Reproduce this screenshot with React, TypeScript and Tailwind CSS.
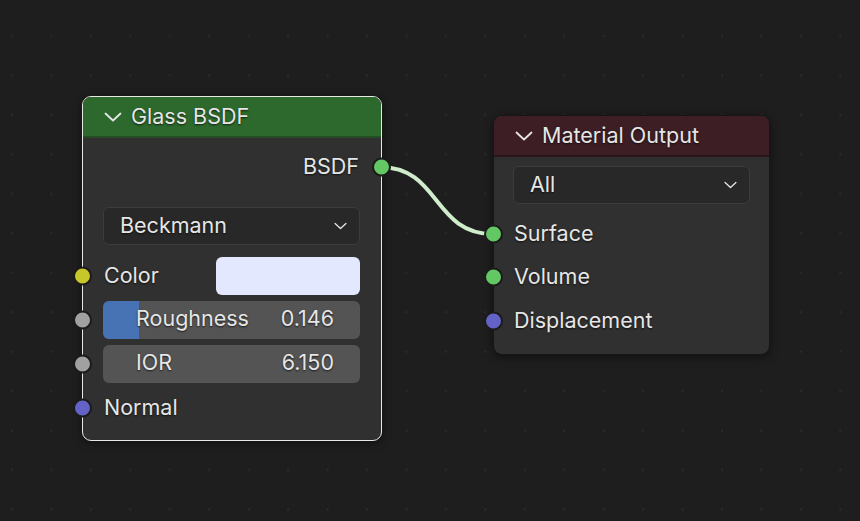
import type { ReactNode } from 'react';

const FONT = "font-['Inter','Noto_Sans',sans-serif]";

const Chevron = ({ className = '' }: { className?: string }) => (
  <svg viewBox="0 0 18 10" className={className} fill="none">
    <polyline points="1.5,1.5 9,8.5 16.5,1.5" stroke="#e6e6e6" strokeWidth="1.8" strokeLinecap="round" strokeLinejoin="round" />
  </svg>
);

const Socket = ({ color, side }: { color: string; side: 'left' | 'right' }) => (
  <span
    className={`absolute top-1/2 -translate-y-1/2 w-[19px] h-[19px] rounded-full border-2 border-[#1b1b1b] ${
      side === 'left' ? 'left-[-10px]' : 'right-[-10px]'
    }`}
    style={{ backgroundColor: color }}
  />
);

const Label = ({ children }: { children: ReactNode }) => (
  <span className="text-[21.5px] text-[#e6e6e6] [text-shadow:0_1px_2px_rgba(0,0,0,0.7)] leading-none">{children}</span>
);

const Dropdown = ({ value }: { value: string }) => (
  <div className="h-[38px] flex items-center justify-between rounded-[6px] bg-[#282828] border border-[#3c3c3c] pl-[16px] pr-[12px]">
    <Label>{value}</Label>
    <Chevron className="w-[13px] h-[8px]" />
  </div>
);

const Slider = ({ label, value, fill }: { label: string; value: number; fill?: number }) => (
  <div className="relative h-[38px] rounded-[6px] bg-[#545454] overflow-hidden flex items-center justify-between pl-[33px] pr-[26px]">
    {fill !== undefined && (
      <div className="absolute left-0 top-0 bottom-0 bg-[#4772b3]" style={{ width: `${fill * 100}%` }} />
    )}
    <span className="relative"><Label>{label}</Label></span>
    <span className="relative"><Label>{value.toFixed(3)}</Label></span>
  </div>
);

const NodeHeader = ({ title, bg, line }: { title: string; bg: string; line: string }) => (
  <div className={`h-[41px] flex items-center gap-[9px] pl-[21px] rounded-t-[8px] border-b-2 ${bg} ${line}`}>
    <Chevron className="w-[18px] h-[10px]" />
    <Label>{title}</Label>
  </div>
);

export default function App() {
  return (
    <div className={`relative w-[860px] h-[521px] overflow-hidden bg-[#1e1e1e] ${FONT}`}>
      {/* canvas grid */}
      <svg className="absolute inset-0" width="860" height="521">
        <defs>
          <pattern id="dots" width="39.45" height="39.45" patternUnits="userSpaceOnUse">
            <rect x="11" y="35" width="2" height="2" fill="#2c2c2c" />
          </pattern>
        </defs>
        <rect width="860" height="521" fill="url(#dots)" />
        <path d="M380,167 C440,167 433,234 493,234" stroke="#cfeccb" strokeWidth="4" fill="none" strokeLinecap="round" />
      </svg>

      {/* Glass BSDF */}
      <div className="absolute left-[82px] top-[96px] w-[300px] h-[345px] rounded-[9px] border-[1.5px] border-[#e8e8e8] bg-[#303030] shadow-[0_2px_8px_rgba(0,0,0,0.5)]">
        <NodeHeader title="Glass BSDF" bg="bg-[#2d692d]" line="border-[#244d24]" />
        <div className="flex flex-col">
          <div className="relative h-[38px] mt-[10px] flex items-center justify-end pr-[22px]">
            <Label>BSDF</Label>
            <Socket color="#63c763" side="right" />
          </div>
          <div className="mt-[21px] pl-[20px] pr-[21px]">
            <Dropdown value="Beckmann" />
          </div>
          <div className="relative h-[38px] mt-[12px] flex items-center justify-between pl-[21px] pr-[21px]">
            <Label>Color</Label>
            <div className="w-[144px] h-[38px] rounded-[6px] bg-[#e3e8ff]" />
            <Socket color="#c7c729" side="left" />
          </div>
          <div className="relative mt-[6px] pl-[20px] pr-[21px]">
            <Slider label="Roughness" value={0.146} fill={0.141} />
            <Socket color="#a1a1a1" side="left" />
          </div>
          <div className="relative mt-[6px] pl-[20px] pr-[21px]">
            <Slider label="IOR" value={6.15} />
            <Socket color="#a1a1a1" side="left" />
          </div>
          <div className="relative h-[38px] mt-[6px] flex items-center pl-[21px]">
            <Label>Normal</Label>
            <Socket color="#6363c7" side="left" />
          </div>
        </div>
      </div>

      {/* Material Output */}
      <div className="absolute left-[493px] top-[115px] w-[277px] h-[240px] rounded-[9px] border-[1.5px] border-[#161616] bg-[#303030] shadow-[0_2px_8px_rgba(0,0,0,0.5)]">
        <NodeHeader title="Material Output" bg="bg-[#3d1e25]" line="border-[#2a161a]" />
        <div className="flex flex-col">
          <div className="mt-[9px] px-[19px]">
            <Dropdown value="All" />
          </div>
          <div className="relative h-[38px] mt-[11px] flex items-center pl-[20px]">
            <Label>Surface</Label>
            <Socket color="#63c763" side="left" />
          </div>
          <div className="relative h-[38px] mt-[5px] flex items-center pl-[20px]">
            <Label>Volume</Label>
            <Socket color="#63c763" side="left" />
          </div>
          <div className="relative h-[38px] mt-[6px] flex items-center pl-[20px]">
            <Label>Displacement</Label>
            <Socket color="#6363c7" side="left" />
          </div>
        </div>
      </div>
    </div>
  );
}
